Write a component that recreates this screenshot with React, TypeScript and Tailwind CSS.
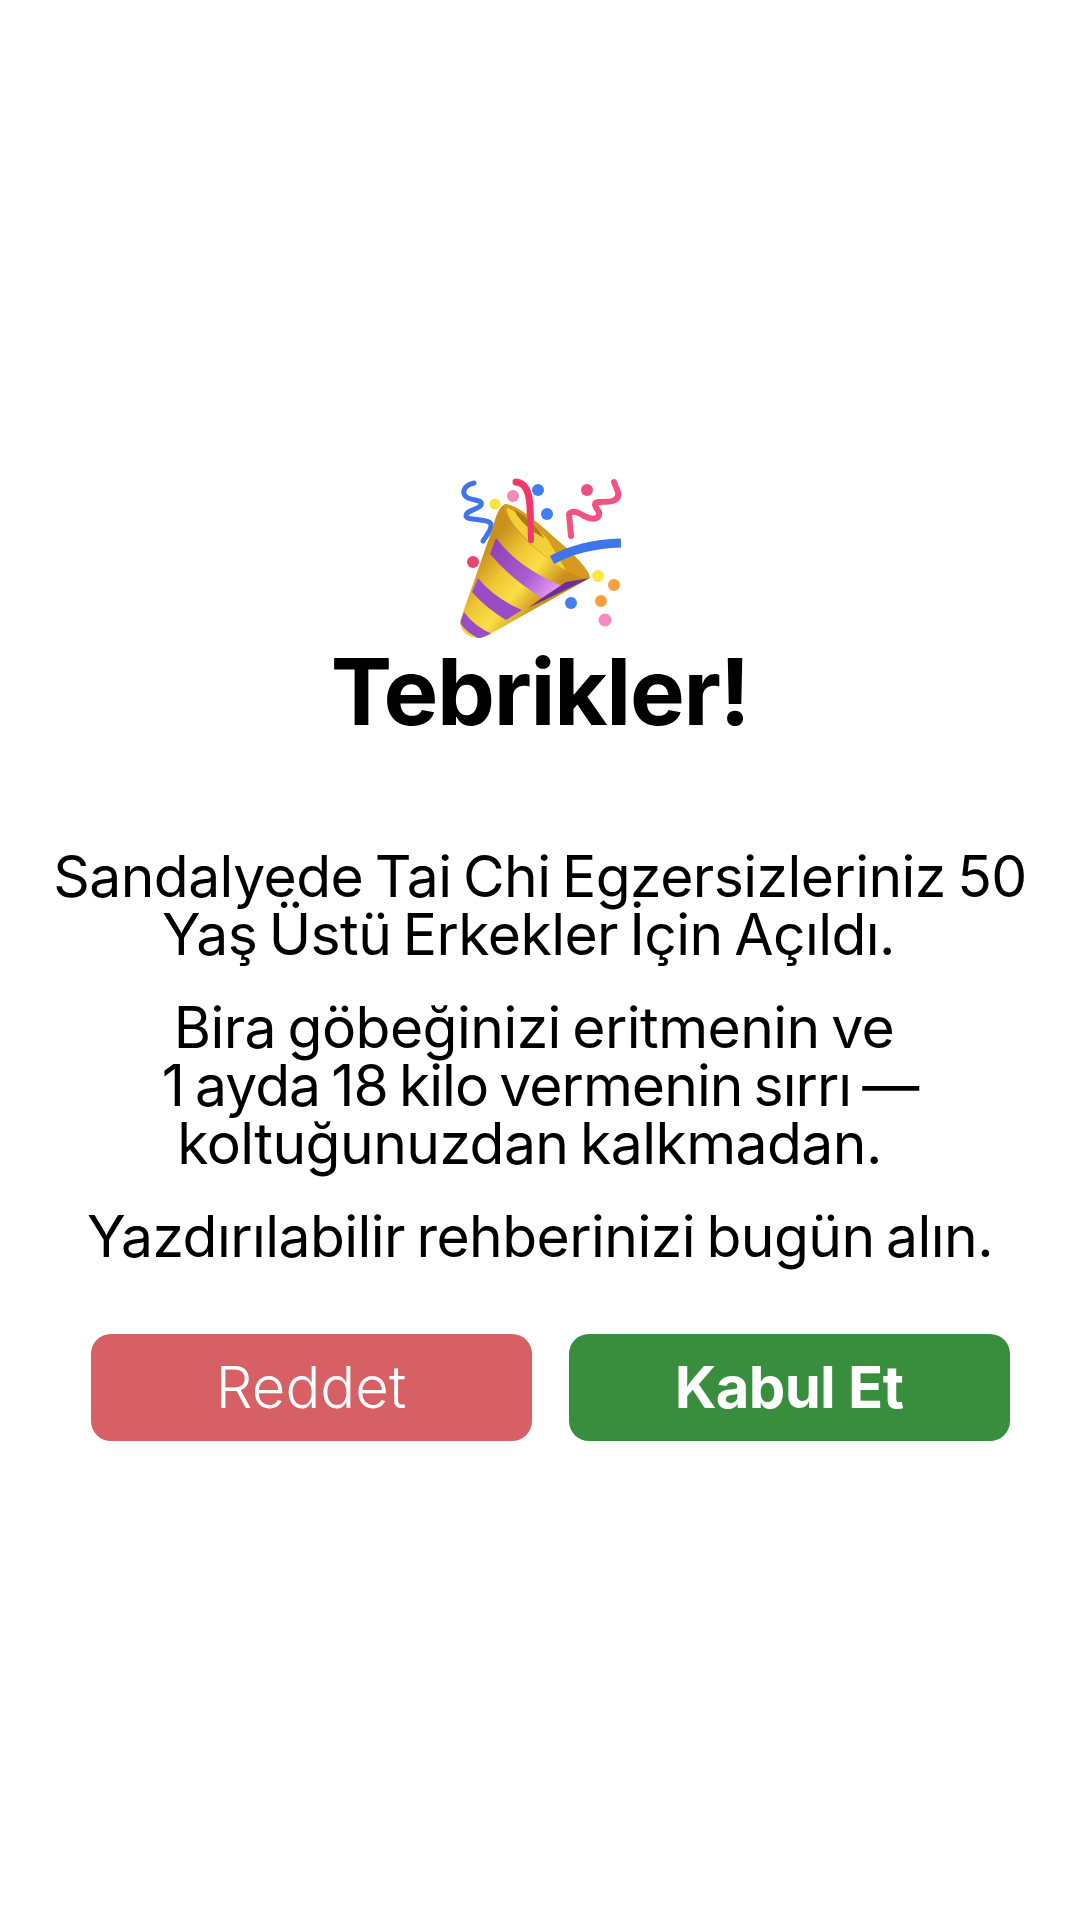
function PartyPopper() {
  return (
    <svg width="180" height="170" viewBox="30 15 180 170" className="block blur-[0.6px]" fill="none">
      <defs>
        <linearGradient id="cone" x1="50" y1="110" x2="110" y2="160" gradientUnits="userSpaceOnUse">
          <stop offset="0" stopColor="#c9901e" />
          <stop offset="0.35" stopColor="#f0c535" />
          <stop offset="0.65" stopColor="#fbdf45" />
          <stop offset="1" stopColor="#c98f1c" />
        </linearGradient>
        <linearGradient id="band" x1="70" y1="80" x2="140" y2="135" gradientUnits="userSpaceOnUse">
          <stop offset="0" stopColor="#8c3db4" />
          <stop offset="0.6" stopColor="#a85dd0" />
          <stop offset="1" stopColor="#f2a4f6" />
        </linearGradient>
        <clipPath id="coneClip">
          <path d="M85 46 C78 50 76 58 72 72 L41 160 C38 170 46 180 58 180 C62 180 66 178 70 176 L170 120 Z" />
        </clipPath>
      </defs>
      {/* streamers behind */}
      <path d="M54 25 C44 27 40 36 48 40 C56 43 63 42 61 47 C58 52 46 52 46 58 C47 63 68 60 71 66 C72 72 66 78 63 83" stroke="#3f74ea" strokeWidth="5" strokeLinecap="round" />
      <path d="M96 24 C106 25 109 34 110 48 L111 82" stroke="#f0386b" strokeWidth="7" strokeLinecap="round" />
      <path d="M151 78 L149 56 C152 52 158 54 164 58 C172 62 180 62 179 54 C175 48 172 44 180 44 C190 44 200 44 198 34 L194 24" stroke="#f2527f" strokeWidth="6" strokeLinecap="round" strokeLinejoin="round" />
      {/* cone */}
      <path d="M85 46 C78 50 76 58 72 72 L41 160 C38 170 46 180 58 180 C62 180 66 178 70 176 L170 120 Z" fill="url(#cone)" />
      <g clipPath="url(#coneClip)">
        <path d="M76 80 Q100 112 148 130 L122 140 Q92 122 70 96 Z" fill="url(#band)" />
        <path d="M58 120 Q74 140 102 152 L86 162 Q66 150 52 134 Z" fill="#9a4cc4" />
        <path d="M44 154 Q54 168 72 176 L60 181 Q48 176 40 165 Z" fill="#9a4cc4" />
        <path d="M146 124 L122 140 L108 150 L170 120 Z" fill="#6c2f96" />
      </g>
      {/* mouth */}
      <path d="M85 46 C95 46 116 62 135 80 C152 94 170 112 170 120 C160 122 142 112 122 96 C100 78 80 56 85 46 Z" fill="#d69a1e" />
      <path d="M87 50 C100 54 116 68 128 82 L146 112 C136 108 128 100 118 92 C102 78 86 60 87 50 Z" fill="#f5cf38" />
      <path d="M94 52 C104 56 118 70 124 80 C112 74 100 64 94 52 Z" fill="#a9791a" />
      <path d="M110 48 L111 82" stroke="#f0386b" strokeWidth="6" strokeLinecap="round" />
      <path d="M132 102 C150 92 170 86 201 85" stroke="#3f74ea" strokeWidth="9" />
      {/* confetti */}
      <circle cx="75" cy="46" r="5.5" fill="#f6e43c" />
      <circle cx="93" cy="38" r="6" fill="#f58ab8" />
      <circle cx="118" cy="32" r="6" fill="#3f7ff0" />
      <circle cx="127" cy="56" r="6" fill="#3f7ff0" />
      <circle cx="167" cy="32" r="6" fill="#ef4f80" />
      <circle cx="53" cy="104" r="6" fill="#e8466c" />
      <circle cx="178" cy="118" r="6" fill="#f8e840" />
      <circle cx="194" cy="127" r="6" fill="#f6a040" />
      <circle cx="181" cy="143" r="6" fill="#f6a040" />
      <circle cx="151" cy="145" r="6" fill="#3f7ff0" />
      <circle cx="185" cy="162" r="6.5" fill="#f48ac0" />
    </svg>
  );
}

export default function App() {
  return (
    <div className="flex h-[1920px] w-[1080px] flex-col items-center justify-center bg-white pb-[7px] font-['Inter',sans-serif] text-black">
      <PartyPopper />
      <h1 className="mt-[-6px] text-[92px] leading-[110px] font-bold tracking-[-1.3px]">Tebrikler!</h1>
      <div className="mt-[101px] flex flex-col gap-[35px] text-center text-[57px] leading-[58px] font-[370] tracking-[-0.55px] [word-spacing:-4px]">
        <p>
          Sandalyede Tai Chi Egzersizleriniz 50
          <br />
          <span className="pr-[23px]">Yaş Üstü Erkekler İçin Açıldı.</span>
        </p>
        <p>
          <span className="pr-[12px]">Bira göbeğinizi eritmenin ve</span>
          <br />
          <span className="tracking-[-0.95px]">1 ayda 18 kilo vermenin sırrı —</span>
          <br />
          <span className="pr-[21px]">koltuğunuzdan kalkmadan.</span>
        </p>
        <p>Yazdırılabilir rehberinizi bugün alın.</p>
      </div>
      <div className="mt-[68px] ml-[20px] flex gap-[37px]">
        <button className="flex h-[107px] w-[441px] items-center justify-center rounded-[20px] bg-[#d66063] text-[58px] font-[350] text-white">
          Reddet
        </button>
        <button className="flex h-[107px] w-[441px] items-center justify-center rounded-[20px] bg-[#388e3c] text-[58px] font-bold tracking-[-0.7px] text-white">
          Kabul Et
        </button>
      </div>
    </div>
  );
}
